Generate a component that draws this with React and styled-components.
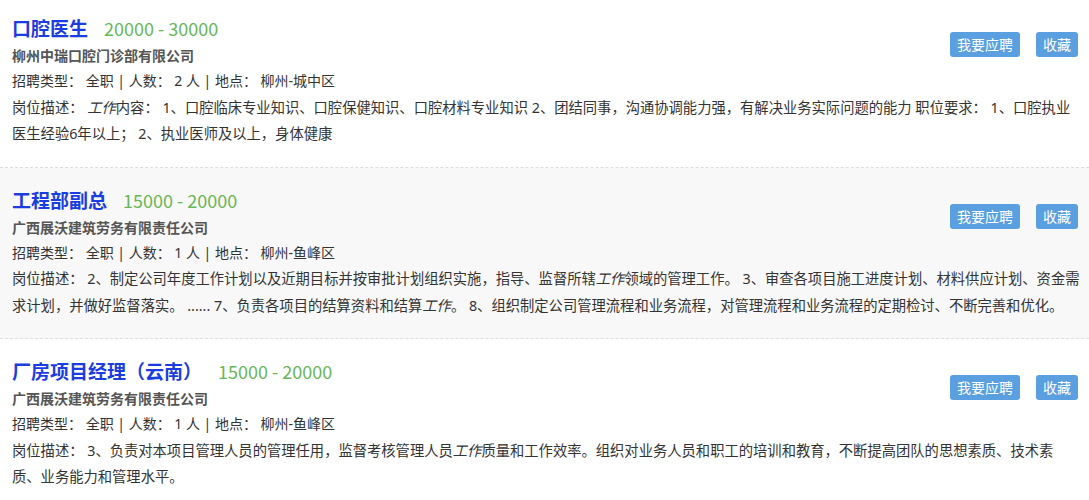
import React from 'react';
import styled, { createGlobalStyle } from 'styled-components';

const GlobalStyle = createGlobalStyle`
  html, body {
    margin: 0;
    padding: 0;
    background: #fff;
  }
  body {
    font-family: "Noto Sans", "Noto Sans CJK SC", sans-serif;
    color: #333;
    overflow: hidden;
  }
`;

const List = styled.ul`
  list-style: none;
  margin: -4px 0 0;
  padding: 0;
`;

const Item = styled.li`
  padding: 18px 9px 19px 12px;
  border-bottom: 1px dashed #ddd;
  background: ${(p) => (p.$active ? '#f8f8f8' : '#fff')};
`;

const Head = styled.div`
  display: flex;
  align-items: flex-start;
  justify-content: space-between;
  padding-right: 2px;
`;

const Meta = styled.div``;

const TitleRow = styled.div`
  display: flex;
  align-items: baseline;
  height: 28px;
  line-height: 28px;
`;

const Title = styled.a`
  font-family: "Noto Sans CJK SC", sans-serif;
  font-size: 19px;
  font-weight: bold;
  color: #1b3de0;
  text-decoration: none;
`;

const Salary = styled.span`
  margin-left: 16px;
  font-family: "Noto Sans CJK SC", sans-serif;
  font-size: 18px;
  color: #68b758;
`;

const Company = styled.div`
  font-family: "Noto Sans CJK SC", sans-serif;
  font-size: 14px;
  line-height: 26px;
  font-weight: bold;
  color: #555;
`;

const Actions = styled.div`
  display: flex;
  gap: 16px;
  margin-top: 18px;
`;

const Button = styled.button`
  height: 25px;
  padding: 0 7px;
  border: 0;
  border-radius: 3px;
  background: #5a9fdf;
  color: #fff;
  font-family: "Noto Sans CJK SC", sans-serif;
  font-size: 14px;
  line-height: 25px;
  cursor: pointer;
`;

const Line = styled.div`
  font-size: ${(p) => (p.$wide ? '14.3px' : '14px')};
  line-height: 26.5px;
  color: #333;
`;

const Em = styled.em`
  font-style: italic;
`;

const jobs = [
  {
    title: '口腔医生',
    salary: '20000 - 30000',
    company: '柳州中瑞口腔门诊部有限公司',
    count: 2,
    place: '柳州-城中区',
    desc: (
      <>
        <Em>工作</Em>内容： 1、口腔临床专业知识、口腔保健知识、口腔材料专业知识 2、团结同事，沟通协调能力强，有解决业务实际问题的能力 职位要求： 1、口腔执业医生经验6年以上； 2、执业医师及以上，身体健康
      </>
    ),
  },
  {
    title: '工程部副总',
    salary: '15000 - 20000',
    company: '广西展沃建筑劳务有限责任公司',
    count: 1,
    place: '柳州-鱼峰区',
    active: true,
    desc: (
      <>
        2、制定公司年度工作计划以及近期目标并按审批计划组织实施，指导、监督所辖<Em>工作</Em>领域的管理工作。 3、审查各项目施工进度计划、材料供应计划、资金需求计划，并做好监督落实。 ...... 7、负责各项目的结算资料和结算<Em>工作</Em>。 8、组织制定公司管理流程和业务流程，对管理流程和业务流程的定期检讨、不断完善和优化。
      </>
    ),
  },
  {
    title: '厂房项目经理（云南）',
    salary: '15000 - 20000',
    company: '广西展沃建筑劳务有限责任公司',
    count: 1,
    place: '柳州-鱼峰区',
    desc: (
      <>
        3、负责对本项目管理人员的管理任用，监督考核管理人员<Em>工作</Em>质量和工作效率。组织对业务人员和职工的培训和教育，不断提高团队的思想素质、技术素质、业务能力和管理水平。
      </>
    ),
  },
];

export default function App() {
  return (
    <>
      <GlobalStyle />
      <List>
        {jobs.map((job) => (
          <Item key={job.title} $active={job.active}>
            <Head>
              <Meta>
                <TitleRow>
                  <Title href="#">{job.title}</Title>
                  <Salary>{job.salary}</Salary>
                </TitleRow>
                <Company>{job.company}</Company>
              </Meta>
              <Actions>
                <Button>我要应聘</Button>
                <Button>收藏</Button>
              </Actions>
            </Head>
            <Line>
              招聘类型： 全职 | 人数： {job.count} 人 | 地点： {job.place}
            </Line>
            <Line $wide>岗位描述： {job.desc}</Line>
          </Item>
        ))}
      </List>
    </>
  );
}
